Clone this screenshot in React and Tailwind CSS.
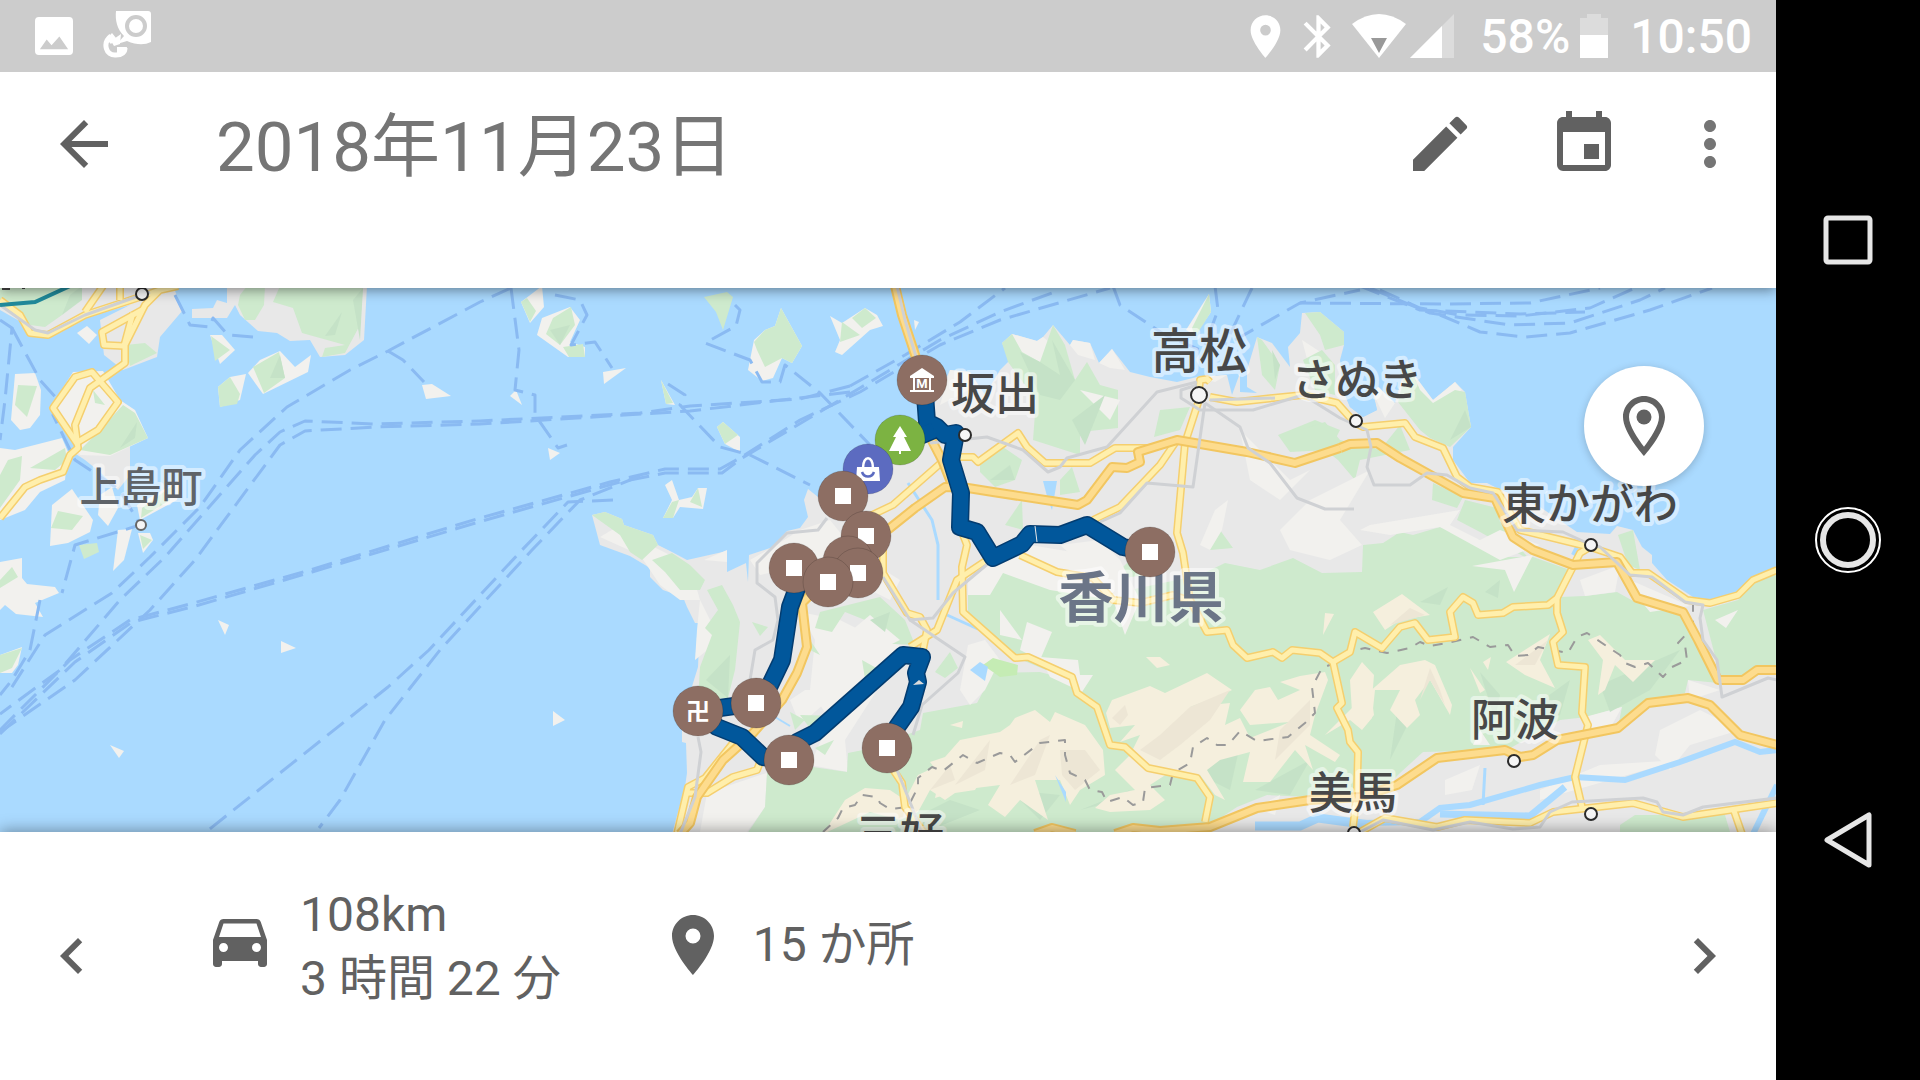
import {
  MdArrowBack,
  MdBluetooth,
  MdChevronLeft,
  MdChevronRight,
  MdDirectionsCar,
  MdEdit,
  MdEvent,
  MdMoreVert,
  MdPlace,
} from 'react-icons/md';

// Map geometry, all in the same coordinate space as the svg viewBox
const MAINLAND =
  '592,515 605,512 622,519 624,525 653,535 658,545 672,552 687,560 727,551 727,572 746,563 748,582 749,555 773,547 787,531 800,528 808,517 804,500 808,489 818,497 845,470 870,447 910,427 933,407 950,370 970,372 985,395 1000,370 1010,360 1002,343 1012,334 1037,341 1043,337 1053,325 1070,345 1073,340 1090,343 1099,363 1112,349 1130,372 1150,377 1177,382 1197,377 1227,375 1232,395 1240,373 1240,392 1257,393 1247,387 1247,370 1257,337 1272,343 1290,367 1288,347 1300,333 1302,313 1320,312 1344,332 1344,345 1340,360 1343,390 1350,407 1363,417 1377,410 1373,393 1378,387 1395,403 1407,360 1417,383 1433,400 1455,382 1465,392 1471,427 1453,447 1453,460 1470,483 1487,483 1497,488 1540,507 1577,532 1610,534 1617,526 1633,530 1642,547 1652,555 1652,563 1667,580 1693,597 1710,600 1740,593 1753,580 1777,568 1777,834 672,834 685,787 687,773 686,743 682,742 682,713 690,693 698,667 700,623 695,623 687,607 683,597 663,590 650,577 650,568 630,556 600,545';

const GRAY_LAND = [
  '82,286 173,286 183,310 160,337 157,357 123,370 104,355 100,320 130,305 60,325 45,332 30,327 0,310 0,286',
  '227,286 367,286 364,340 345,355 320,357 310,340 290,341 277,333 258,331 240,315 235,305 227,318 192,318 192,309 213,308 217,300 227,303',
  '70,450 130,440 130,475 118,490 100,472 85,460',
];

const ISLANDS = [
  '77,333 87,326 97,335 89,344',
  '15,374 35,373 41,390 40,415 30,428 20,430 11,420',
  '52,405 73,372 103,371 120,400 135,410 148,438 110,456 80,455',
  '0,448 15,450 62,438 68,452 65,480 40,492 25,510 0,520',
  '52,505 72,489 93,520 90,532 68,543 50,546',
  '100,495 112,487 118,508 108,526 98,515',
  '137,505 180,480 177,500 140,520',
  '138,533 150,533 153,540 143,553',
  '118,530 132,529 124,560 113,571',
  '0,562 22,558 22,578 27,584 55,587 59,593 35,603 43,617 16,614 5,605 0,610',
  '0,655 22,647 18,665 12,673 0,673',
  '218,620 229,625 225,635',
  '281,641 296,648 281,653',
  '110,745 124,751 119,758',
  '553,711 565,720 553,726',
  '210,335 222,335 235,350 220,364',
  '218,387 230,377 246,374 240,400 220,407',
  '248,373 260,360 280,351 295,367 311,355 308,372 263,394',
  '422,385 432,384 451,396 426,399',
  '521,302 542,286 544,307 530,323',
  '537,335 542,318 570,307 580,320 570,342 585,347 585,357 568,357',
  '603,372 626,368 604,384',
  '510,396 516,390 522,405',
  '548,448 560,453 550,460',
  '661,380 675,405 666,404',
  '750,360 754,340 765,330 775,326 781,308 802,346 792,363 782,358 773,378 762,381 748,370',
  '830,316 842,323 865,308 877,315 883,326 870,330 842,355 835,352 840,340',
  '717,427 723,422 740,437 740,452 725,444',
  '665,485 672,480 679,500 692,497 698,488 707,488 703,509 680,507 673,518 663,518 672,500',
  '704,560 727,550 727,562',
  '1186,330 1209,294 1211,312 1195,335',
  '914,320 919,322 915,330',
];

const LIGHT_PATCHES = [
  '1012,334 1037,341 1043,337 1053,345 1040,366 1020,352',
  '1070,345 1073,340 1090,343 1095,360 1078,355',
  '1099,363 1112,349 1125,370 1110,368',
  '950,370 970,372 978,385 950,400 940,405',
  '1197,377 1227,375 1215,382',
  '1302,340 1325,355 1330,375 1310,370',
  '1373,393 1378,387 1395,403 1385,418',
  '1407,365 1433,400 1455,382 1462,390 1440,403 1440,415 1412,395',
  '800,530 830,520 850,545 830,560 760,575 750,560 773,547',
  '700,600 720,640 695,660 697,630',
  '800,612 840,620 880,640 920,650 890,670 845,740 848,772 810,765 830,720 810,690 815,640',
  '868,560 900,580 890,600 870,590',
  '790,700 805,690 840,690 800,725',
  '707,793 760,775 767,773 765,807 747,832 700,832',
  '600,537 620,525 650,545 690,565 700,600 680,600 660,585 640,555',
  '968,573 1003,560 1030,545 1120,560 1140,600 1125,635 1113,600 1050,590 1003,573 990,595 968,595',
  '1000,610 1022,640 1000,635',
  '1027,622 1052,632 1040,660 1020,650',
  '968,645 985,640 1000,660 985,690 970,705 960,690',
  '1040,657 1078,660 1080,675 1093,675 1082,692 1050,677',
  '1310,500 1370,470 1340,520 1362,545 1330,560 1290,550 1280,530',
  '1200,545 1215,510 1228,500 1222,530 1210,550',
  '1060,545 1100,540 1120,560 1090,572',
  '1360,530 1370,525 1460,510 1450,525 1480,540 1500,530 1540,545 1500,560 1440,527 1390,535',
  '1580,580 1620,565 1615,592 1585,596',
  '1472,566 1533,555 1514,592 1505,570',
  '1630,580 1690,606 1650,612 1640,600',
  '1715,620 1738,610 1726,628',
  '1688,680 1720,690 1690,700',
  '1585,717 1622,707 1612,725 1590,730',
  '1473,745 1480,730 1490,745',
  '1660,730 1700,710 1740,730 1690,745 1670,770 1655,755',
  '1445,780 1480,765 1472,790 1445,795',
  '1540,790 1600,765 1680,760 1610,780 1540,800',
  '1255,808 1280,795 1275,815',
  '840,640 870,615 900,640 860,660',
  '1240,430 1290,480 1310,470 1280,500 1250,480',
  '1080,390 1120,400 1110,420',
];

const GREENS = [
  // Inland hills
  '968,595 1003,573 1060,573 1130,590 1200,575 1225,563 1260,570 1293,558 1322,573 1362,572 1363,545 1383,543 1400,532 1413,535 1440,527 1480,540 1495,542 1507,557 1533,557 1570,570 1560,597 1585,596 1617,592 1635,602 1683,615 1703,650 1718,683 1688,680 1685,693 1647,700 1618,727 1622,707 1587,717 1560,720 1507,750 1423,752 1400,773 1380,793 1310,797 1267,795 1237,807 1207,827 1160,834 747,834 765,807 767,773 813,767 847,772 848,753 863,750 920,730 923,713 977,703 993,673 1040,672 1070,680 1010,655 968,613',
  '592,515 605,512 622,519 624,525 653,535 658,545 642,560 630,552 620,535',
  '652,560 672,553 690,565 705,580 700,590 680,590 665,572',
  '707,590 722,585 733,605 740,622 735,670 728,698 698,700 700,667 712,635 705,628 718,610',
  '752,622 768,627 760,636',
  '1002,343 1012,334 1022,352 1040,362 1053,325 1065,345 1075,380 1087,362 1100,385 1118,390 1118,428 1080,432 1080,455 1033,440 1036,400 1008,362',
  '1160,410 1190,407 1180,430 1154,437',
  '980,465 1000,445 1022,460 1015,480 995,487 980,472',
  '1005,525 1022,500 1023,530',
  '1060,480 1072,467 1080,492 1060,495',
  '1278,435 1315,420 1340,430 1330,450 1290,452',
  '1203,540 1220,530 1233,548 1210,550',
  '1209,294 1211,312 1195,337 1192,328',
  '1257,337 1262,340 1280,365 1275,390 1262,375',
  '1305,313 1320,312 1344,332 1344,345 1325,350 1320,335',
  '1303,360 1322,350 1335,365 1335,395 1315,390',
  '1398,402 1408,362 1420,390 1433,403 1455,390 1465,392 1471,427 1450,447 1430,438 1420,430',
  '1300,430 1325,422 1340,440 1380,450 1400,425 1410,450 1360,460 1355,480 1338,460',
  '1433,483 1463,497 1457,508 1432,500',
  '1465,500 1497,508 1505,530 1530,560 1480,532 1457,520',
  '1618,535 1633,530 1640,570 1628,565',
  '1703,610 1738,600 1756,582 1777,574 1777,665 1755,668 1740,677 1720,675',
  '820,612 880,597 905,620 915,645 875,643 865,620 845,612 832,632 815,628',
  '810,640 820,655 810,650',
  '862,660 880,670 866,685',
  '800,715 845,716 815,735',
  '815,748 834,740 825,755',
  '935,672 950,652 958,668 945,678',
  '790,712 805,720 795,730',
  '990,555 1010,575 1000,585 978,580',
  '1620,825 1635,815 1725,815 1730,832 1620,834',
  '1130,560 1145,575 1110,580',
  // Islands
  '0,286 82,286 62,315 45,327 30,325 0,307',
  '125,345 145,343 157,353 130,366',
  '18,385 37,386 27,417 15,405',
  '80,450 100,430 123,405 135,413 148,438 110,455',
  '93,390 105,405 95,403',
  '0,475 8,460 22,456 20,480 0,508',
  '30,468 65,448 67,460 55,470',
  '58,511 83,516 72,530 51,528',
  '142,508 172,486 170,500 141,518',
  '79,545 97,543 99,552 84,559',
  '140,535 152,540 143,549',
  '0,580 12,567 18,577 0,588',
  '0,655 22,648 12,668 0,673',
  '240,295 247,286 265,286 264,305 255,320 245,320 238,305',
  '273,302 280,286 363,286 360,325 345,353 322,357 325,348 345,345 302,333 293,308',
  '211,336 230,350 215,361',
  '218,387 230,377 240,394 237,404 220,407',
  '253,367 279,352 285,378 264,393',
  '521,302 527,298 536,311 530,322',
  '546,334 553,318 571,307 575,325 560,345',
  '563,347 583,344 585,357 569,357',
  '661,380 673,403 666,404',
  '704,297 727,292 733,297 723,330 716,312',
  '754,342 765,330 775,326 781,308 802,346 792,363 782,358 765,367 757,350',
  '842,322 860,335 840,342',
  '852,318 865,308 876,318 862,328',
  '717,427 723,422 738,435 725,444',
  '690,502 698,488 702,507',
  '672,502 679,500 673,518 663,518',
];

const SHADES = [
  '62,315 70,295 82,286 82,300',
  '120,448 137,422 135,438',
  '325,336 342,312 335,335',
  '353,300 363,288 360,340',
  '270,378 280,355 285,378',
  '550,330 570,325 560,345',
  '1072,420 1105,395 1085,445',
  '1020,352 1040,362 1060,375 1052,340 1075,380 1060,400 1040,395',
  '706,680 730,655 728,698',
  '870,620 890,612 885,632',
  '990,480 1010,465 1015,480',
  '1450,440 1465,410 1471,427',
  '1420,602 1448,587 1440,605',
  '1485,592 1500,580 1498,598',
  '1400,690 1420,665 1410,720 1390,760',
  '1515,720 1570,680 1560,715 1540,722',
  '1600,685 1680,650 1650,690 1610,712',
  '1480,672 1500,695 1495,720',
  '1190,770 1240,745 1230,790',
  '1010,790 1060,795 1040,820',
  '1255,790 1310,760 1290,795',
  '1080,810 1130,790 1120,800',
  '890,830 950,800 980,810 920,834',
  '1275,380 1280,365 1272,350',
];

const BEIGES = [
  '1106,713 1112,700 1150,686 1165,693 1207,673 1232,690 1222,695 1190,707 1230,703 1225,725 1240,718 1250,738 1290,722 1250,725 1240,710 1255,690 1270,687 1278,700 1300,690 1280,682 1300,676 1325,672 1328,680 1315,715 1310,735 1340,755 1335,762 1305,745 1313,770 1295,750 1270,782 1243,782 1250,752 1220,760 1207,770 1225,800 1215,795 1200,775 1170,772 1150,785 1165,800 1150,810 1110,812 1095,808 1110,795 1135,790 1115,770 1130,755 1140,735 1120,742 1135,725 1110,728',
  '960,740 1000,732 1010,725 1015,718 1035,710 1050,722 1055,712 1085,725 1103,750 1105,775 1080,790 1070,805 1060,780 1035,780 1048,820 1020,800 1005,817 988,805 1000,785 960,790 935,798 940,775 930,762 945,757',
  '823,834 845,800 865,788 890,790 905,800 918,775 950,760 980,755 990,765 975,790 955,793 945,800 930,790 918,812 900,820 870,812',
  '1325,735 1360,700 1400,665 1425,660 1435,665 1452,705 1450,715 1430,680 1415,700 1420,715 1407,728 1390,710 1400,690 1375,690 1372,718 1362,730 1350,720',
  '1373,612 1402,594 1430,615 1400,620 1385,630',
  '1506,662 1550,634 1540,660 1555,688 1525,675',
  '1588,640 1600,635 1625,660 1655,660 1633,682 1615,665 1605,690 1598,695 1603,660',
  '1350,680 1362,662 1374,675 1372,700 1374,715 1363,728 1352,712',
  '1325,613 1334,614 1323,635',
  '1146,657 1160,657 1170,665 1157,668',
  '1470,668 1485,690 1480,693',
  '1483,662 1491,657 1488,670',
  '950,725 963,721 962,728',
];

const BEIGE_SHADES = [
  '1125,705 1112,718 1120,725 1128,715',
  '1180,745 1210,720 1230,690 1190,707 1160,735 1140,750 1160,760',
  '1010,785 1040,740 1050,735 1035,775',
  '1060,750 1085,750 1100,770 1075,790 1062,775',
  '955,785 990,740 985,770',
  '1280,730 1310,700 1310,725 1275,760',
  '1430,680 1420,700 1430,668 1440,690 1445,705',
  '1390,625 1410,608 1425,615',
  '930,790 950,765 955,780',
  '1515,665 1548,640 1535,665',
];

const WATER_PATCHES = [
  '1043,481 1057,481 1052,510 1048,500',
  '970,670 980,662 988,667 985,681',
  '1055,775 1066,792 1066,802',
  '1343,390 1350,407 1363,417 1377,410 1373,393 1362,388',
];

const RIVERS = [
  ['1360,823 1420,822 1440,808 1470,805 1540,785 1575,777 1625,780 1680,762 1735,742 1760,752 1777,750', 6],
  ['1440,814 1530,816 1565,787', 7],
  ['1255,826 1300,826 1318,818 1370,825', 9],
  ['1753,834 1777,785', 6],
  ['1485,768 1483,805', 3],
  ['908,483 932,520 938,545 938,600', 3],
  ['947,615 978,629', 3],
  ['775,717 790,726', 2],
  ['1573,555 1577,547', 4],
];

const FERRIES = [
  '511,288 480,302 388,351 350,370 287,407 240,450 200,507 150,557 112,593 45,635 10,690',
  '850,386 800,399 690,406 640,413 480,421 375,424 305,421 280,432 255,455 165,557 120,600 60,670 0,714',
  '850,392 690,411 480,424 375,427 305,431 280,445 195,560 150,610 75,680 0,732',
  '0,730 70,660 130,620 190,604 310,570 480,518 610,482 665,469 720,469 740,458 800,420 860,392 940,345 1000,320 1110,288',
  '0,734 75,662 132,622 192,607 312,572 482,521 620,482 665,473 722,473 742,458 860,388 940,340 1000,312 1060,290',
  '850,386 905,355 960,322 1005,288',
  '613,500 568,502 522,550 429,650 388,687 206,832',
  '640,476 580,500 532,550 440,650 385,720 340,800 319,828',
  '511,288 519,350 515,390 535,395 535,415 558,448 567,445',
  '388,351 403,360 424,382',
  '175,295 190,325 210,327 213,318 228,335 253,337',
  '0,320 12,328 5,400 0,440',
  '12,328 40,380 58,400 53,415 75,460 120,490 140,525 75,545 62,593',
  '555,295 580,300 587,315 571,345 595,342 612,368',
  '735,305 740,310 736,326 705,343 750,360 762,382 780,382 785,365 820,393 870,445',
  '668,384 685,395 680,405 720,447 750,455 810,485',
  '1113,286 1120,305 1165,335 1200,350',
  '1215,286 1218,310 1205,345',
  '1252,288 1225,345',
  '1235,340 1300,303 1360,290',
  '1300,303 1440,304 1530,303 1600,288',
  '1380,290 1420,308 1460,315 1520,316 1590,308 1635,288',
  '1370,288 1430,313 1510,325 1570,323 1640,300 1665,288',
  '1440,315 1480,332 1525,337 1570,333 1650,310 1712,288',
  '1360,286 1420,310 1520,314 1585,312',
  '40,600 30,650 12,680 0,695',
];

const YELLOW_ROADS = [
  '0,518 25,487 40,480 63,472 70,455 78,448 75,425 90,388 125,363 125,345 145,305 160,290 178,286',
  '78,445 53,408 75,377 92,372 118,402 98,430 88,436 78,442',
  '142,310 102,332 104,345 124,346 131,320 133,313',
  '0,300 20,315 30,333 48,335 85,315 140,297 160,290',
  '85,312 103,286',
  '120,286 120,300',
  '960,457 973,457 978,462 1018,433 1027,447 1045,463 1090,463 1115,448 1147,448',
  '1177,440 1160,465 1120,507 1093,520',
  '1210,382 1207,379 1200,380 1198,403 1185,443 1177,533 1183,553 1190,600 1207,632 1227,630 1233,645 1247,658 1273,652 1282,658 1292,650 1320,653 1333,662 1350,652 1355,632 1382,648 1400,627 1415,623 1428,640 1455,637 1450,612 1463,597 1473,603 1478,615 1503,613 1513,607 1548,605 1557,598 1580,553 1590,547',
  '1557,598 1557,613 1563,632 1553,642 1558,665 1585,667 1582,713 1588,725 1575,777 1582,807',
  '1360,832 1385,818 1437,827 1465,820 1530,823 1553,812 1633,803 1683,817 1777,803',
  '1733,808 1742,834',
  '1333,662 1342,703 1337,708 1348,730 1350,742 1358,752 1357,793 1353,827',
  '1210,397 1237,402 1273,398 1303,395 1337,403 1355,423 1363,427 1405,423 1415,437 1443,448 1457,477 1470,487 1498,492 1520,530 1590,547 1620,557 1632,573 1648,573 1687,600 1710,603 1738,595 1753,580 1777,570',
  '960,527 967,545 962,567 963,612 1015,658 1028,657 1072,677 1077,693 1097,707 1110,745 1125,747 1148,768 1197,778 1210,797 1205,822',
  '1020,555 1057,572 1093,578 1113,600 1140,603 1173,595 1188,600',
  '942,462 893,505 870,516',
  '883,545 883,573 907,613 920,617 927,630 923,650 918,680',
  '990,558 957,580 937,630 910,647',
  '890,765 902,783 905,807 925,834',
  '677,834 688,787 705,778 733,743',
  '687,793 707,793 733,777 757,770 762,757',
];

const ORANGE_ROADS = [
  '895,286 902,315 925,385',
  '928,433 942,460 952,485',
  '1035,834 1052,828 1075,834',
  '1340,448 1295,463 1247,452 1177,440 1138,452 1140,462 1127,468 1112,467 1087,500 1078,505 993,492 968,488 945,487 915,508 890,528 850,555 802,603 807,647 797,673 782,700 753,733 723,760 697,797 690,823 680,834',
  '1340,448 1350,444 1377,443 1400,458 1463,493 1495,498 1513,537 1533,550 1573,565 1617,562 1637,598 1683,612 1698,640 1718,680 1743,680 1757,670 1777,670',
  '1777,745 1740,735 1710,705 1688,698 1648,703 1618,728 1557,740 1533,755 1520,757 1505,750 1437,758 1397,785 1360,797 1310,800 1257,808 1210,827 1160,831 1133,828 1115,834',
];

const RAILS = [
  '897,286 905,320 923,380',
  '0,305 35,330 48,333 85,315 150,292',
  '930,443 987,437 1023,450 1048,472 1060,467 1067,458 1107,447 1157,392 1197,382',
  '1205,403 1193,487 1147,483 1120,513 1100,522',
  '1205,403 1240,427 1248,448 1270,463 1297,498 1325,509 1354,509',
  '1197,385 1181,390 1181,398 1200,410 1253,410 1303,395 1340,418 1367,430 1371,447 1367,467 1374,485 1410,485 1427,473 1447,475 1470,488 1493,493 1517,530 1563,532 1587,543 1600,547 1630,575 1652,577 1685,602 1703,605 1700,618 1703,640 1717,660 1722,697 1768,678 1777,680',
  '1210,400 1275,398',
  '827,518 818,530 787,533 757,563 757,583 775,597 778,620 773,640 755,650 750,680',
  '698,737 701,752 695,797 680,834',
  '990,562 953,593 933,618 910,620 883,577',
  '910,620 965,657 958,673 922,705 913,735',
  '895,765 912,807 922,834',
  '1360,832 1383,820 1433,830 1470,822 1513,829 1540,827 1550,812 1572,802 1643,798 1657,802 1663,812 1683,815 1703,807 1777,798',
];

const BORDER =
  '823,832 838,818 843,808 855,805 862,795 877,797 880,803 890,809 908,807 918,787 918,778 932,767 943,771 963,755 977,763 1000,753 1010,755 1015,762 1040,743 1065,740 1065,755 1070,773 1085,780 1090,790 1102,792 1107,802 1123,797 1133,805 1143,802 1145,788 1170,785 1173,773 1190,763 1193,747 1207,738 1217,745 1228,745 1240,731 1257,741 1288,737 1305,723 1315,713 1312,687 1322,668 1340,661 1355,650 1365,648 1387,653 1410,648 1420,642 1430,646 1447,643 1473,637 1490,647 1508,645 1515,656 1528,655 1538,647 1568,653 1577,637 1587,633 1620,655 1625,663 1635,667 1648,663 1663,677 1672,667 1687,660 1685,645 1678,643 1693,627 1693,605';

const ROUTES = [
  '925,395 927,422 937,427 945,435 956,433 951,460 961,493 960,527 977,532 993,558 1022,544 1030,534 1060,535 1087,525 1123,547 1147,552',
  '868,469 901,444 934,430',
  '843,496 866,536 858,573',
  '828,582 800,580 790,607 782,660 770,685 756,703 698,711 717,727 742,737 763,757 788,760 797,742 815,733 903,655 922,657 916,673 918,682 911,707 897,727 887,748',
];

const TOWNS = [
  { x: 1199, y: 395, r: 8 },
  { x: 965, y: 435, r: 6 },
  { x: 1356, y: 421, r: 6 },
  { x: 1591, y: 545, r: 6 },
  { x: 1514, y: 761, r: 6 },
  { x: 1591, y: 814, r: 6 },
  { x: 142, y: 294, r: 6 },
  { x: 141, y: 525, r: 5, color: '#666666' },
  { x: 1354, y: 833, r: 6 },
];

const LABELS = [
  { text: '高松', x: 1199, y: 368, size: 48 },
  { text: '坂出', x: 995, y: 410, size: 44 },
  { text: 'さぬき', x: 1357, y: 396, size: 44 },
  { text: '東かがわ', x: 1590, y: 520, size: 44 },
  { text: '上島町', x: 141, y: 502, size: 41, color: '#5f6368' },
  { text: '香川県', x: 1141, y: 617, size: 55, color: '#6b7587', weight: 700 },
  { text: '三好', x: 900, y: 850, size: 44 },
  { text: '阿波', x: 1515, y: 736, size: 44 },
  { text: '美馬', x: 1353, y: 809, size: 44 },
];

const STOPS = [
  { x: 922, y: 380, type: 'museum' },
  { x: 900, y: 440, type: 'park', color: '#7cb342' },
  { x: 868, y: 469, type: 'shop', color: '#5c6bc0' },
  { x: 843, y: 496 },
  { x: 866, y: 536 },
  { x: 794, y: 568 },
  { x: 848, y: 561, type: 'covered' },
  { x: 858, y: 573 },
  { x: 828, y: 582 },
  { x: 698, y: 711, type: 'temple' },
  { x: 756, y: 703 },
  { x: 789, y: 760 },
  { x: 887, y: 748 },
  { x: 1150, y: 552 },
];

const Polygons = ({ items, fill }) => (
  <g fill={fill}>
    {items.map((points) => <polygon key={points} points={points} />)}
  </g>
);

const Lines = ({ items, stroke, width, dash }) => (
  <g fill="none" stroke={stroke} strokeWidth={width} strokeDasharray={dash} strokeLinejoin="round">
    {items.map((points) => <polyline key={points} points={points} />)}
  </g>
);

const StopGlyph = ({ type }) => {
  if (type === 'covered') return null;
  if (type === 'museum') {
    return (
      <g>
        <path d="M0 -12 L12 -4 V-2 H-12 V-4 Z" fill="#fff" />
        <path d="M-8 -3 V10 M8 -3 V10 M-12 11 H12" stroke="#fff" strokeWidth="2" fill="none" />
        <text y="8" textAnchor="middle" fontSize="13" fontWeight="700" fill="#fff" className="font-['Roboto',sans-serif]">M</text>
      </g>
    );
  }
  if (type === 'park') {
    return <path d="M0 -14 L7 -3 H4 L11 11 H1 V14 H-1 V11 H-11 L-4 -3 H-7 Z" fill="#fff" />;
  }
  if (type === 'shop') {
    return (
      <g>
        <path d="M-11 -2 H11 L12 12 H-12 Z" fill="#fff" />
        <path d="M-5 -1 C-5 -14 5 -14 5 -1" stroke="#fff" strokeWidth="2.5" fill="none" />
        <path d="M-6 3 C-4 9 4 9 6 3" stroke="#5c6bc0" strokeWidth="2.5" fill="none" />
      </g>
    );
  }
  if (type === 'temple') {
    return <text y="9" textAnchor="middle" fontSize="24" fontWeight="700" fill="#fff" className="font-['Noto_Sans_CJK_JP',sans-serif]">卍</text>;
  }
  return <rect x="-8" y="-8" width="16" height="16" fill="#fff" />;
};

const TimelineMap = () => (
  <svg viewBox="0 288 1776 544" preserveAspectRatio="xMidYMid slice" className="block h-full w-full bg-[#aadaff]">
    <polygon points={MAINLAND} fill="#e8e8e8" />
    <Polygons items={GRAY_LAND} fill="#e8e8e8" />
    <Polygons items={ISLANDS} fill="#f2f1ee" />
    <Polygons items={LIGHT_PATCHES.slice(0, 15)} fill="#f2f1ee" />
    <Polygons items={GREENS} fill="#ceeacd" />
    <Polygons items={LIGHT_PATCHES.slice(15)} fill="#f2f1ee" />
    <polygon points="983,665 993,658 1018,665 1017,675 1000,677" fill="#c5ecb4" />
    <Polygons items={SHADES} fill="#c5e2c7" />
    <Polygons items={BEIGES} fill="#f5efdd" />
    <Polygons items={BEIGE_SHADES} fill="#ede6d5" />
    <Polygons items={WATER_PATCHES} fill="#aadaff" />
    {RIVERS.map(([points, width]) => (
      <polyline key={points} points={points} fill="none" stroke="#aadaff" strokeWidth={width} />
    ))}

    <Lines items={FERRIES} stroke="#8abaf2" width={3} dash="21 9" />
    <Lines items={[BORDER]} stroke="#9a9a9a" width={2} dash="10 9" />

    <Lines items={YELLOW_ROADS} stroke="#f5cf6e" width={8} />
    <Lines items={YELLOW_ROADS} stroke="#ffefac" width={5} />
    <Lines items={ORANGE_ROADS} stroke="#f2c660" width={10} />
    <Lines items={ORANGE_ROADS} stroke="#fddc8e" width={6} />
    <Lines items={RAILS} stroke="#cfd1d4" width={3} />
    <polyline points="0,305 35,302 70,286" fill="none" stroke="#20899a" strokeWidth="4" />
    <path d="M2 286 H10 V290 H2 Z M22 286 H25 V289 H22 Z" fill="#424242" />

    <Lines items={ROUTES} stroke="#033c70" width={18} />
    <Lines items={ROUTES} stroke="#01579b" width={15} />
    <path d="M1035 526 L1036 534 L1037 542" stroke="#e8e8e8" fill="none" />
    <path d="M913 685 L919 680 L924 684 Z" fill="#dcdcdc" />

    {TOWNS.map((t) => (
      <circle key={`${t.x}-${t.y}`} cx={t.x} cy={t.y} r={t.r} fill="#f5f5f5" stroke={t.color || '#2b2b2b'} strokeWidth="2" />
    ))}
    {LABELS.map((l) => (
      <text
        key={l.text}
        x={l.x}
        y={l.y}
        textAnchor="middle"
        fontSize={l.size}
        fontWeight={l.weight || 500}
        fill={l.color || '#484848'}
        stroke="#fff"
        strokeOpacity="0.5"
        strokeWidth="8"
        strokeLinejoin="round"
        paintOrder="stroke"
        className="font-['Noto_Sans_CJK_JP',sans-serif]"
      >
        {l.text}
      </text>
    ))}

    {STOPS.map((s) => (
      <g key={`${s.x}-${s.y}`} transform={`translate(${s.x} ${s.y})`}>
        <circle r="25" fill={s.color || '#8d6e63'} stroke="#000" strokeOpacity="0.15" />
        <StopGlyph type={s.type} />
      </g>
    ))}
  </svg>
);

const PlaceOutlineIcon = () => (
  <svg width="72" height="72" viewBox="0 0 24 24" fill="currentColor">
    <path
      fillRule="evenodd"
      d="M12 2C8.13 2 5 5.13 5 9c0 5.25 7 13 7 13s7-7.75 7-13c0-3.87-3.13-7-7-7zM7 9c0-2.76 2.24-5 5-5s5 2.24 5 5c0 2.88-2.88 7.19-5 9.88C9.92 16.21 7 11.85 7 9z"
    />
    <circle cx="12" cy="9" r="2.5" />
  </svg>
);

const CallIcon = () => (
  <svg width="48" height="48" viewBox="0 0 48 48">
    <path d="M13 1 H45 Q48 1 48 4 V32 Q38 37 24 31 L14 34 L21 26 C14 19 12 10 13 1 Z" fill="#fff" />
    <circle cx="33" cy="16" r="9" fill="#fff" stroke="#ccc" strokeWidth="4" />
    <path d="M8 26 C-1 33 3 46 13 45 C19 45 22 42 22 38" fill="none" stroke="#fff" strokeWidth="5" />
    <path d="M3 29 L9 23 L13 28 L8 34 Z M14 37 L24 37 L23 43 L14 44 Z M8 31 L18 24 L17 34 L11 36 Z" fill="#fff" />
  </svg>
);

const StatusBar = () => (
  <div className="relative z-20 flex h-[72px] shrink-0 items-center bg-[#cccccc] pl-[35px] pr-6 text-white">
    <svg width="38" height="38" viewBox="0 0 39 39">
      <path d="M4 0 H35 Q39 0 39 4 V35 Q39 39 35 39 H4 Q0 39 0 35 V4 Q0 0 4 0 Z M5 33 H34 L25 20 L17 29 L12 23 Z" fill="#fff" fillRule="evenodd" />
    </svg>
    <div className="ml-[30px] -mt-1">
      <CallIcon />
    </div>
    <div className="ml-auto flex items-center">
      <MdPlace size={51} />
      <MdBluetooth size={51} className="ml-[2px]" />
      <svg width="54" height="44" viewBox="0 0 54 44" className="ml-2">
        <path d="M0 10 Q27 -10 54 10 L27 44 Z" fill="#fff" />
        <path d="M19 24 H35 L27 39 Z" fill="#999" />
      </svg>
      <svg width="44" height="44" viewBox="0 0 44 44" className="ml-1">
        <path d="M0 44 L44 0 V44 Z" fill="#dcdcdc" />
        <path d="M0 44 L32 12 V44 Z" fill="#fff" />
      </svg>
      <span className="ml-[26px] pt-[2px] text-[48px] font-medium leading-[72px]">58%</span>
      <svg width="28" height="44" viewBox="0 0 28 44" className="ml-[10px]">
        <path d="M7 0 H21 V4 H28 V44 H0 V4 H7 Z" fill="#dcdcdc" />
        <path d="M0 21 H28 V44 H0 Z" fill="#fff" />
      </svg>
      <span className="ml-[22px] pt-[2px] text-[48px] font-medium leading-[72px]">10:50</span>
    </div>
  </div>
);

const NavBar = () => (
  <nav className="flex w-36 shrink-0 flex-col bg-black py-[90px]">
    <button type="button" aria-label="最近" className="flex flex-1 items-center justify-center">
      <svg width="50" height="50" viewBox="0 0 50 50">
        <rect x="3" y="3" width="44" height="44" rx="2" fill="none" stroke="#e6e6e6" strokeWidth="5" />
      </svg>
    </button>
    <button type="button" aria-label="ホーム" className="flex flex-1 items-center justify-center">
      <svg width="66" height="66" viewBox="0 0 66 66" fill="none">
        <circle cx="33" cy="33" r="32" stroke="#fff" strokeWidth="2" />
        <circle cx="33" cy="33" r="25" stroke="#e6e6e6" strokeWidth="6" />
      </svg>
    </button>
    <button type="button" aria-label="戻る" className="flex flex-1 items-center justify-center">
      <svg width="50" height="56" viewBox="0 0 50 56">
        <path d="M4 28 L46 3 V53 Z" fill="none" stroke="#e6e6e6" strokeWidth="5" strokeLinejoin="round" />
      </svg>
    </button>
  </nav>
);

const App = () => {
  return (
    <div className="flex h-screen overflow-hidden bg-white font-['Roboto','Noto_Sans_CJK_JP',sans-serif]">
      <div className="flex min-w-0 flex-1 flex-col">
        <StatusBar />

        <header className="relative z-10 flex h-[216px] shrink-0 items-start bg-white pl-12 pr-[30px] pt-9 text-[#616161] shadow-[0_2px_12px_rgba(0,0,0,0.45)]">
          <button type="button" aria-label="戻る"><MdArrowBack size={72} /></button>
          <h1 className="ml-24 text-[69px] leading-[80px] text-[#757575]">2018年11月23日</h1>
          <div className="ml-auto flex">
            <button type="button" aria-label="編集"><MdEdit size={72} /></button>
            <button type="button" aria-label="カレンダー" className="ml-[72px]"><MdEvent size={72} /></button>
            <button type="button" aria-label="その他" className="ml-[54px] text-[#757575]"><MdMoreVert size={72} /></button>
          </div>
        </header>

        <main className="relative min-h-0 flex-1">
          <TimelineMap />
          <button
            type="button"
            aria-label="場所"
            className="absolute right-[72px] top-[78px] flex size-[120px] items-center justify-center rounded-full bg-white text-[#616161] shadow-[0_2px_8px_rgba(0,0,0,0.2)]"
          >
            <PlaceOutlineIcon />
          </button>
        </main>

        <footer className="relative z-10 flex h-[248px] shrink-0 items-center bg-white px-9 text-[48px] leading-[64px] text-[#616161] shadow-[0_-2px_14px_rgba(0,0,0,0.35)]">
          <button type="button" aria-label="前の日"><MdChevronLeft size={72} /></button>
          <div className="ml-24 flex items-center pb-[18px]">
            <MdDirectionsCar size={72} className="mb-[14px]" />
            <div className="ml-6">
              <p>108km</p>
              <p>3 時間 22 分</p>
            </div>
            <MdPlace size={72} className="ml-24 mb-1" />
            <p className="mb-1 ml-6">15 か所</p>
          </div>
          <button type="button" aria-label="次の日" className="ml-auto"><MdChevronRight size={72} /></button>
        </footer>
      </div>
      <NavBar />
    </div>
  );
};

export default App;
